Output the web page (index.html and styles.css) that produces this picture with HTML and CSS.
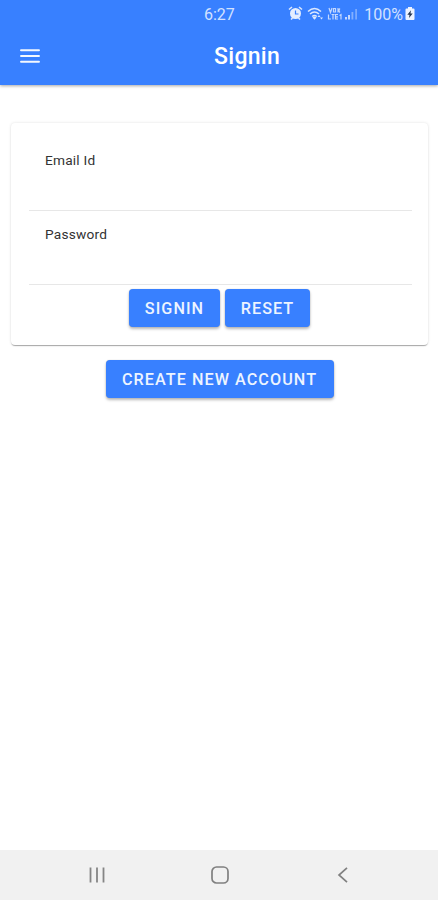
FILE: index.html
```html
<!DOCTYPE html>
<html lang="en">
<head>
<meta charset="utf-8">
<meta name="viewport" content="width=device-width, initial-scale=1">
<title>Signin</title>
<link rel="stylesheet" href="styles.css">
</head>
<body>
<header class="header">
  <div class="status">
    <time class="clock">6:27</time>
    <div class="indicators">
      <svg class="status-icons" width="72" height="18" viewBox="0 0 72 18" aria-hidden="true">
        <g fill="none" stroke="#dce8ff" stroke-width="1.6">
          <path d="M1 4.500 4 2M14 4.500 11 2M3 14.500l1.500-1.500M12 14.500 10.500 13"/>
          <path d="M20 6.500Q26.500.500 33 6.500M22 9Q26.500 5 31 9M24.200 11.500q2.300-2 4.600 0" stroke-width="1.500"/>
        </g>
        <circle cx="7.500" cy="8.500" r="5.500" fill="#e4edff"/>
        <path d="M7.500 5.500v3.500h3" fill="none" stroke="#3880ff" stroke-width="1.200"/>
        <path d="M26.500 14.800l-2-2.400q2-1.600 4 0z" fill="#dce8ff"/>
        <path d="M29.500 12l1.500-2 1.500 2zM32 12.500h3l-1.500 2z" fill="#dce8ff"/>
        <g fill="none" stroke="#c4d8ff" stroke-width="1.200">
          <path d="M41 3l1.500 4.500L44 3M45.500 3.500h2v3.500h-2zM50 3v4.500M52 3.500q-2 2 0 4M40.500 9.500v4.500h2.500M43.500 9.500h3M45 9.500v5M50 9.500h-2.500v4.500H50M47.500 11.800H50M51.500 10.500l1.500-1v5"/>
        </g>
        <path d="M57 12h2v2.500h-2zM60 10h2v4.500h-2z" fill="#c4d8ff"/>
        <path d="M63.500 7h1.800v7.500h-1.800zM67.300 4h1.600v10.500h-1.600z" fill="#83afff"/>
      </svg>
      <span class="percent">100%</span>
      <svg class="battery" width="10" height="14" viewBox="0 0 10 14" aria-hidden="true">
        <path d="M3 0h4v1.500h1.500a1 1 0 0 1 1 1V12a1 1 0 0 1-1 1h-7a1 1 0 0 1-1-1V2.500a1 1 0 0 1 1-1H3z" fill="#edf3ff"/>
        <path d="M6 3.200 2.300 7.700h2.200L4 11l3.700-4.500H5.500z" fill="#26364f"/>
      </svg>
    </div>
  </div>
  <div class="toolbar">
    <svg class="menu" width="20" height="14" viewBox="0 0 20 14" aria-label="Menu"><path d="M1 1.200h18M1 7h18M1 12.800h18" stroke="#f3f8ff" stroke-width="1.900" stroke-linecap="round"/></svg>
    <h1 class="title">Signin</h1>
  </div>
</header>
<main class="content">
  <form class="card">
    <div class="field"><span class="label">Email Id</span></div>
    <div class="field"><span class="label">Password</span></div>
    <div class="actions">
      <button type="button" class="btn btn-signin">SIGNIN</button>
      <button type="button" class="btn btn-reset">RESET</button>
    </div>
  </form>
  <button type="button" class="btn btn-create">CREATE NEW ACCOUNT</button>
</main>
<nav class="navbar">
  <svg width="18" height="18" viewBox="0 0 18 18" aria-hidden="true"><path d="M2.500 1.500v15M9 1.500v15M15.500 1.500v15" stroke="#858585" stroke-width="1.800"/></svg>
  <svg width="18" height="18" viewBox="0 0 18 18" aria-hidden="true"><rect x="1" y="1" width="16" height="16" rx="4.500" fill="none" stroke="#808080" stroke-width="1.700"/></svg>
  <svg width="18" height="18" viewBox="0 0 18 18" aria-hidden="true"><path d="M13 1.800 5 9l8 7.200" fill="none" stroke="#808080" stroke-width="1.700"/></svg>
</nav>
</body>
</html>
```
FILE: styles.css
```css
* {
  box-sizing: border-box;
}

body {
  margin: 0;
  height: 900px;
  display: flex;
  flex-direction: column;
  background: #fff;
  font-family: Roboto, "Liberation Sans", sans-serif;
}

.header {
  height: 85px;
  background: #3880ff;
  box-shadow: 0 1px 3px rgba(0, 0, 0, 0.35);
  color: #fff;
}

.status {
  height: 28px;
  display: flex;
  align-items: center;
  justify-content: space-between;
  padding: 0 23px 0 204px;
  font-size: 16px;
  line-height: 29px;
  color: #d3e2ff;
}

.indicators {
  display: flex;
  align-items: center;
}

.percent {
  margin-left: 4px;
  margin-right: 2px;
}

.toolbar {
  height: 56px;
  display: grid;
  grid-template-columns: 194px 1fr;
  align-items: center;
  padding-left: 20px;
}

.title {
  margin: 0;
  padding-top: 2px;
  font-size: 23px;
  font-weight: 500;
  line-height: 30px;
  letter-spacing: 0.3px;
}

.content {
  flex: 1;
  display: flex;
  flex-direction: column;
  align-items: center;
  padding: 38px 10px 0 11px;
}

.card {
  width: 417px;
  height: 222px;
  padding: 14px 16px 0 18px;
  border-radius: 4px;
  background: #fff;
  box-shadow: 0 2px 1px -1px rgba(0, 0, 0, 0.2), 0 1px 1px rgba(0, 0, 0, 0.14), 0 0 3px rgba(0, 0, 0, 0.12);
}

.field {
  height: 74px;
  padding: 14px 16px 0;
  border-bottom: 1.5px solid #e7e7e7;
}

.label {
  display: block;
  font-size: 13.7px;
  line-height: 18px;
  letter-spacing: 0.2px;
  color: #333;
}

.actions {
  display: flex;
  justify-content: center;
  gap: 5px;
  padding: 4px 2px 0 0;
}

.btn {
  height: 38px;
  padding: 0;
  border: 0;
  border-radius: 4px;
  background: #3880ff;
  box-shadow: 0 2px 3px rgba(0, 0, 0, 0.28), 0 0 1px rgba(0, 0, 0, 0.25);
  color: #edf4ff;
  font-family: inherit;
  font-size: 16.2px;
  font-weight: 500;
  letter-spacing: 1.05px;
}

.btn-signin {
  width: 91px;
}

.btn-reset {
  width: 85px;
}

.btn-create {
  width: 228px;
  margin-top: 15px;
}

.navbar {
  height: 50px;
  display: flex;
  align-items: center;
  justify-content: space-between;
  padding: 0 86px 0 88px;
  background: #f1f1f1;
}
```
